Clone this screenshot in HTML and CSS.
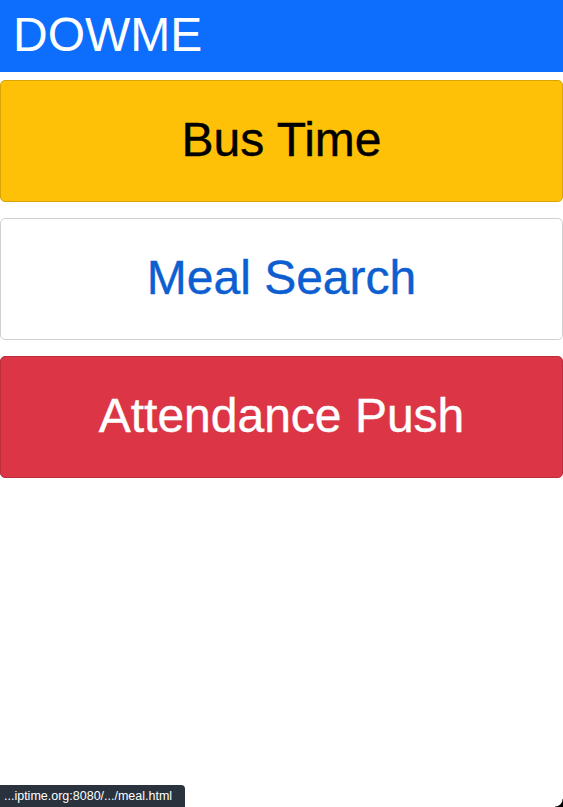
FILE: index.html
```html
<!DOCTYPE html>
<html>
<head>
<meta charset="utf-8">
<link rel="stylesheet" href="styles.css">
</head>
<body>
<header class="topbar">DOWME</header>
<main class="menu">
  <a class="btn btn-warning" href="#">Bus Time</a>
  <a class="btn btn-light" href="#">Meal Search</a>
  <a class="btn btn-danger" href="#">Attendance Push</a>
</main>
<div class="status">...iptime.org:8080/.../meal.html</div>
<div class="corner"></div>
</body>
</html>
```

FILE: styles.css
```css
html, body {
  margin: 0;
  padding: 0;
  height: 100%;
  background: #fff;
  font-family: "Liberation Sans", "Noto Sans CJK KR", sans-serif;
  overflow: hidden;
}
.topbar {
  background: #0d6efd;
  color: #fff;
  height: 72px;
  box-sizing: border-box;
  padding-left: 13px;
  font-size: 48px;
  line-height: 70px;
}
.menu {
  display: flex;
  flex-direction: column;
  gap: 16px;
  padding-top: 8px;
}
.btn {
  display: flex;
  align-items: center;
  justify-content: center;
  height: 122px;
  box-sizing: border-box;
  border: 1px solid;
  border-radius: 5px;
  font-size: 48px;
  text-decoration: none;
  padding-bottom: 4px;
  -webkit-text-stroke: 0.4px currentColor;
}
.btn-warning {
  background: #ffc107;
  border-color: #d9a406;
  color: #000;
}
.btn-light {
  background: #fff;
  border-color: #d0d0d0;
  color: #0d5fd1;
}
.btn-danger {
  background: #dc3545;
  border-color: #bb2d3b;
  color: #fff;
}
.status {
  position: fixed;
  left: 0;
  bottom: 0;
  width: 185px;
  height: 22px;
  box-sizing: border-box;
  background: #29323d;
  color: #fff;
  font-family: "Liberation Sans", sans-serif;
  font-size: 12.5px;
  line-height: 22px;
  padding-left: 4px;
  border-top-right-radius: 4px;
}
.corner {
  position: fixed;
  right: 0;
  bottom: 0;
  width: 8px;
  height: 8px;
  background: radial-gradient(circle at 0 0, transparent 7px, #000 8px);
}
```
